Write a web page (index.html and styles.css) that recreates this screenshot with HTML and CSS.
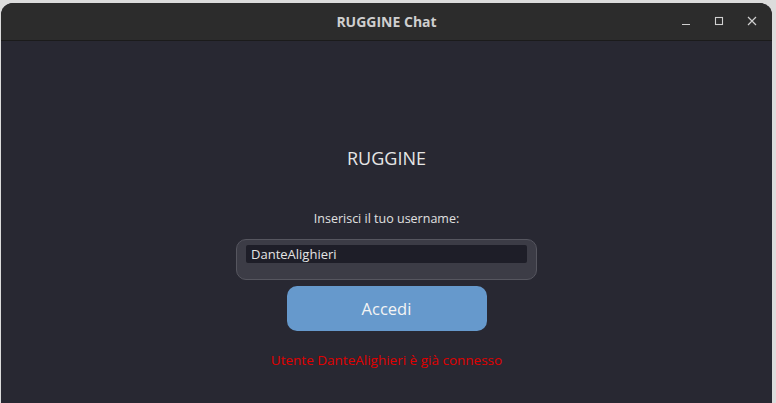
FILE: index.html
```html
<!DOCTYPE html>
<html lang="it">
<head>
<meta charset="utf-8">
<title>RUGGINE Chat</title>
<link rel="stylesheet" href="styles.css">
</head>
<body>
<div class="desk">
  <div class="window">
    <div class="titlebar">
      <div class="title">RUGGINE Chat</div>
      <div class="controls">
        <svg class="ctl" width="14" height="14" viewBox="0 0 14 14"><path d="M3 10.5h8" stroke="#d0d0d0" stroke-width="1.2"/></svg>
        <svg class="ctl" width="14" height="14" viewBox="0 0 14 14"><rect x="3.5" y="3.5" width="7" height="7" fill="none" stroke="#d0d0d0" stroke-width="1.1"/></svg>
        <svg class="ctl" width="14" height="14" viewBox="0 0 14 14"><path d="M3 3l8 8M11 3l-8 8" stroke="#d0d0d0" stroke-width="1.2"/></svg>
      </div>
    </div>
    <div class="content">
      <h1 class="app-name">RUGGINE</h1>
      <p class="label">Inserisci il tuo username:</p>
      <div class="field-frame">
        <div class="field">DanteAlighieri</div>
      </div>
      <button class="btn">Accedi</button>
      <p class="error">Utente DanteAlighieri è già connesso</p>
    </div>
  </div>
</div>
</body>
</html>
```

FILE: styles.css
```css
html, body {
  margin: 0;
  padding: 0;
}
body {
  width: 776px;
  height: 403px;
  overflow: hidden;
  background: #dcdcdc;
  font-family: "Open Sans", "Noto Sans", sans-serif;
}
.desk {
  padding: 3px 0 0 1px;
  display: flex;
}
.window {
  width: 771px;
  height: 400px;
  border-radius: 12px 12px 0 0;
  overflow: hidden;
  background: #282832;
  display: flex;
  flex-direction: column;
}
.titlebar {
  height: 37px;
  flex: none;
  background: #2c2c2c;
  border-bottom: 1px solid #1b1b1b;
  display: flex;
  align-items: center;
  justify-content: center;
  position: relative;
}
.title {
  color: #cfcfcf;
  font-weight: 700;
  font-size: 14px;
  letter-spacing: 0;
}
.controls {
  position: absolute;
  right: 13px;
  top: 11px;
  display: flex;
  gap: 19px;
}
.ctl {
  display: block;
}
.content {
  flex: 1;
  display: flex;
  flex-direction: column;
  align-items: center;
}
.app-name {
  margin: 105px 0 0 0;
  font-weight: 400;
  font-size: 18px;
  line-height: 24px;
  color: #e6e6e6;
}
.label {
  margin: 40px 0 0 0;
  font-size: 12.5px;
  line-height: 18px;
  color: #e0e0e0;
}
.field-frame {
  margin-top: 11px;
  width: 281px;
  height: 21px;
  padding: 5px 9px 13px 9px;
  background: #3c3c46;
  border: 1px solid #56565f;
  border-radius: 10px;
}
.field {
  height: 18px;
  background: #1e1e28;
  border-radius: 2px;
  color: #e4e4e4;
  font-size: 13px;
  line-height: 18px;
  padding-left: 5px;
}
.btn {
  margin-top: 6px;
  width: 200px;
  height: 45px;
  border: none;
  border-radius: 10px;
  background: #6699cc;
  color: #f4f4f4;
  font-family: inherit;
  font-size: 16.5px;
  padding: 0;
}
.error {
  margin: 20px 0 0 0;
  font-size: 13.5px;
  line-height: 18px;
  color: #e00000;
}
```
